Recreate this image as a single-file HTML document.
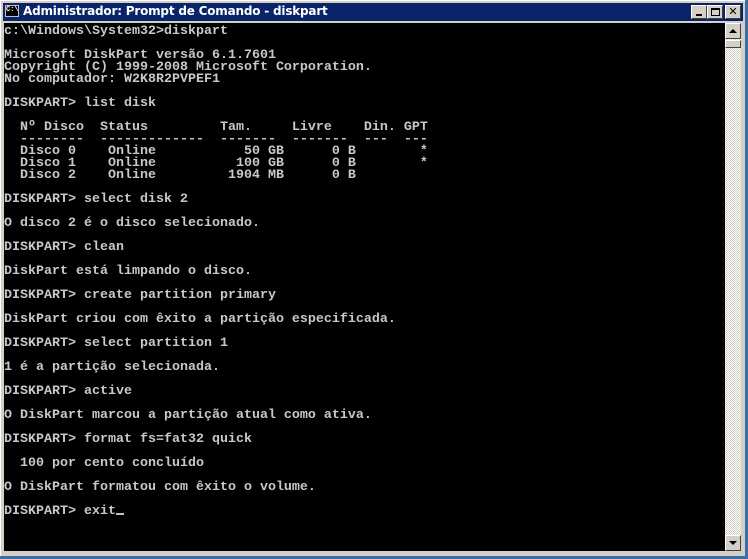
<!DOCTYPE html>
<html><head><meta charset="utf-8"><style>
html,body{margin:0;padding:0;}
body{width:748px;height:559px;background:#d4d0c8;position:relative;overflow:hidden;}
.edge{position:absolute;background:#3a6ea5;}
#title{position:absolute;left:3px;top:3px;width:740px;height:18px;background:#0a246a;}
#title .t{position:absolute;left:20px;top:1px;color:#fff;font:bold 12px "DejaVu Sans","Liberation Sans",sans-serif;letter-spacing:-0.2px;white-space:nowrap;}
#ico{position:absolute;left:2px;top:2px;width:14px;height:12px;background:#000;border:1px solid #c0c0c0;box-sizing:border-box;color:#fff;font:bold 7px "Liberation Mono",monospace;line-height:9px;}
.btn{position:absolute;top:2px;width:16px;height:14px;background:#d4d0c8;box-sizing:border-box;border:1px solid;border-color:#fff #404040 #404040 #fff;}
#con{position:absolute;left:4px;top:23px;width:721px;height:528px;background:#000;}
pre{margin:0;position:absolute;left:4px;top:26px;color:#c8c8c8;font:bold 13.33px/12px "Liberation Mono",monospace;}
#sb{position:absolute;left:725px;top:23px;width:16px;height:528px;background:repeating-conic-gradient(#fff 0 25%,#d4d0c8 0 50%) 0 0/2px 2px;}
.sbb{position:absolute;left:0;width:16px;height:16px;background:#d4d0c8;box-sizing:border-box;border:1px solid;border-color:#fff #404040 #404040 #fff;}
#cur{position:absolute;left:116px;top:513px;width:8px;height:2px;background:#c0c0c0;}
</style></head><body>
<div class="edge" style="left:745px;top:0;width:3px;height:559px"></div>
<div class="edge" style="left:0;top:556px;width:748px;height:3px"></div>
<div style="position:absolute;left:0;top:0;width:745px;height:1px;background:#fff"></div>
<div style="position:absolute;left:0;top:0;width:1px;height:556px;background:#fff"></div>
<div id="title"><div id="ico">C:\</div><div class="t">Administrador: Prompt de Comando - diskpart</div>
<div class="btn" style="left:688px"><div style="position:absolute;left:4px;top:8px;width:6px;height:2px;background:#000"></div></div>
<div class="btn" style="left:704px"><div style="position:absolute;left:3px;top:2px;width:9px;height:8px;border:1px solid #000;border-top-width:2px;box-sizing:border-box"></div></div>
<div class="btn" style="left:722px;font:bold 11px/12px 'DejaVu Sans',sans-serif;text-align:center;color:#000">✕</div>
</div>
<div id="con"></div>
<pre>c:\Windows\System32&gt;diskpart

Microsoft DiskPart versão 6.1.7601
Copyright (C) 1999-2008 Microsoft Corporation.
No computador: W2K8R2PVPEF1

DISKPART&gt; list disk

  Nº Disco  Status         Tam.     Livre    Din. GPT
  --------  -------------  -------  -------  ---  ---
  Disco 0    Online           50 GB      0 B        *
  Disco 1    Online          100 GB      0 B        *
  Disco 2    Online         1904 MB      0 B

DISKPART&gt; select disk 2

O disco 2 é o disco selecionado.

DISKPART&gt; clean

DiskPart está limpando o disco.

DISKPART&gt; create partition primary

DiskPart criou com êxito a partição especificada.

DISKPART&gt; select partition 1

1 é a partição selecionada.

DISKPART&gt; active

O DiskPart marcou a partição atual como ativa.

DISKPART&gt; format fs=fat32 quick

  100 por cento concluído

O DiskPart formatou com êxito o volume.

DISKPART&gt; exit</pre>
<div id="cur"></div>
<div id="sb">
<div class="sbb" style="top:0"><div style="position:absolute;left:3px;top:5px;width:0;height:0;border-left:4px solid transparent;border-right:4px solid transparent;border-bottom:4px solid #000"></div></div>
<div class="sbb" style="top:17px;height:8px"></div>
<div class="sbb" style="top:512px"><div style="position:absolute;left:3px;top:5px;width:0;height:0;border-left:4px solid transparent;border-right:4px solid transparent;border-top:4px solid #000"></div></div>
</div>
</body></html>
